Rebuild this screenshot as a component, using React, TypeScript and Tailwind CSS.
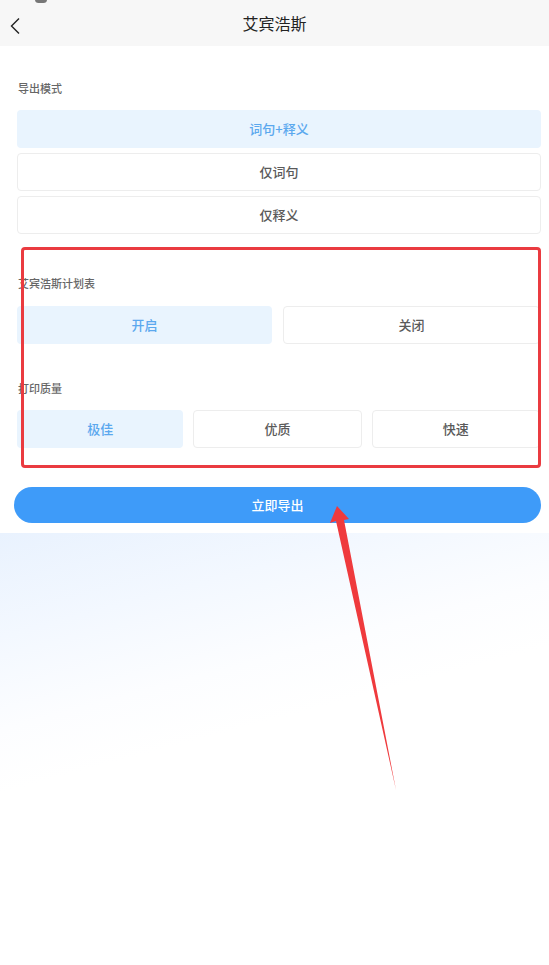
import React from "react";

const font = { fontFamily: '"Noto Sans CJK SC", "Noto Sans", sans-serif' };

function Opt({ label, active, row }: { label: string; active?: boolean; row?: boolean }) {
  return (
    <div
      className={
        "flex h-[38px] shrink-0 items-center justify-center rounded-[4px] text-[13px] font-medium " +
        (row ? "min-w-0 flex-1 " : "w-full ") +
        (active
          ? "bg-[#e9f4fe] text-[#5ba8ee]"
          : "border border-[#ededed] bg-white text-[#5a5a5a]")
      }
    >
      {label}
    </div>
  );
}

function Label({ children, mt }: { children: React.ReactNode; mt: string }) {
  return (
    <div className={"h-[18px] pl-[18px] text-[11px] font-medium leading-[18px] text-[#666] " + mt}>
      {children}
    </div>
  );
}

export default function App() {
  return (
    <div className="relative flex min-h-[965px] w-full flex-col bg-white" style={font}>
      {/* header */}
      <div className="relative flex h-[46px] shrink-0 items-center justify-center bg-[#f7f7f7]">
        <span className="absolute left-[35px] top-[-4px] h-[7px] w-[12px] rounded-full bg-[#777]" />
        <svg className="absolute left-[9px] top-[17px]" width="12" height="18" viewBox="0 0 12 18">
          <polyline points="10,1.5 2.5,9 10,16.5" fill="none" stroke="#222" strokeWidth="1.4" />
        </svg>
        <span className="text-[16px] text-[#222]">艾宾浩斯</span>
      </div>

      {/* content */}
      <div className="flex shrink-0 flex-col pb-[10px]">
        <Label mt="mt-[33px]">导出模式</Label>
        <div className="mt-[13px] flex flex-col gap-[5px] pl-[17px] pr-[8px]">
          <Opt label="词句+释义" active />
          <Opt label="仅词句" />
          <Opt label="仅释义" />
        </div>

        <Label mt="mt-[40px]">艾宾浩斯计划表</Label>
        <div className="mt-[14px] flex gap-[11px] pl-[17px] pr-[9px]">
          <Opt label="开启" active row />
          <Opt label="关闭" row />
        </div>

        <Label mt="mt-[35px]">打印质量</Label>
        <div className="mt-[13px] flex gap-[10px] pl-[17px] pr-[9px]">
          <Opt label="极佳" active row />
          <Opt label="优质" row />
          <Opt label="快速" row />
        </div>

        <div className="mt-[39px] pl-[14px] pr-[8px]">
          <div className="flex h-[36px] items-center justify-center rounded-full bg-[#3e9bf9] text-[13px] font-medium text-white">
            立即导出
          </div>
        </div>
      </div>

      {/* gradient area */}
      <div className="flex-1 bg-[linear-gradient(165deg,#e9f2fe_0%,#f3f8ff_18%,#fcfdff_34%,#ffffff_45%,#ffffff_100%)]" />

      {/* annotation: red box */}
      <div className="pointer-events-none absolute left-[21px] top-[247px] h-[221px] w-[520px] rounded-[4px] border-[3px] border-[#ea3b40]" />

      {/* annotation: red arrow */}
      <svg
        className="pointer-events-none absolute left-0 top-0"
        width="549"
        height="965"
        viewBox="0 0 549 965"
      >
        <polygon
          points="337,506 330,523 336,521 396,790 344,520 349,519"
          fill="#ef3a3d"
        />
      </svg>
    </div>
  );
}
